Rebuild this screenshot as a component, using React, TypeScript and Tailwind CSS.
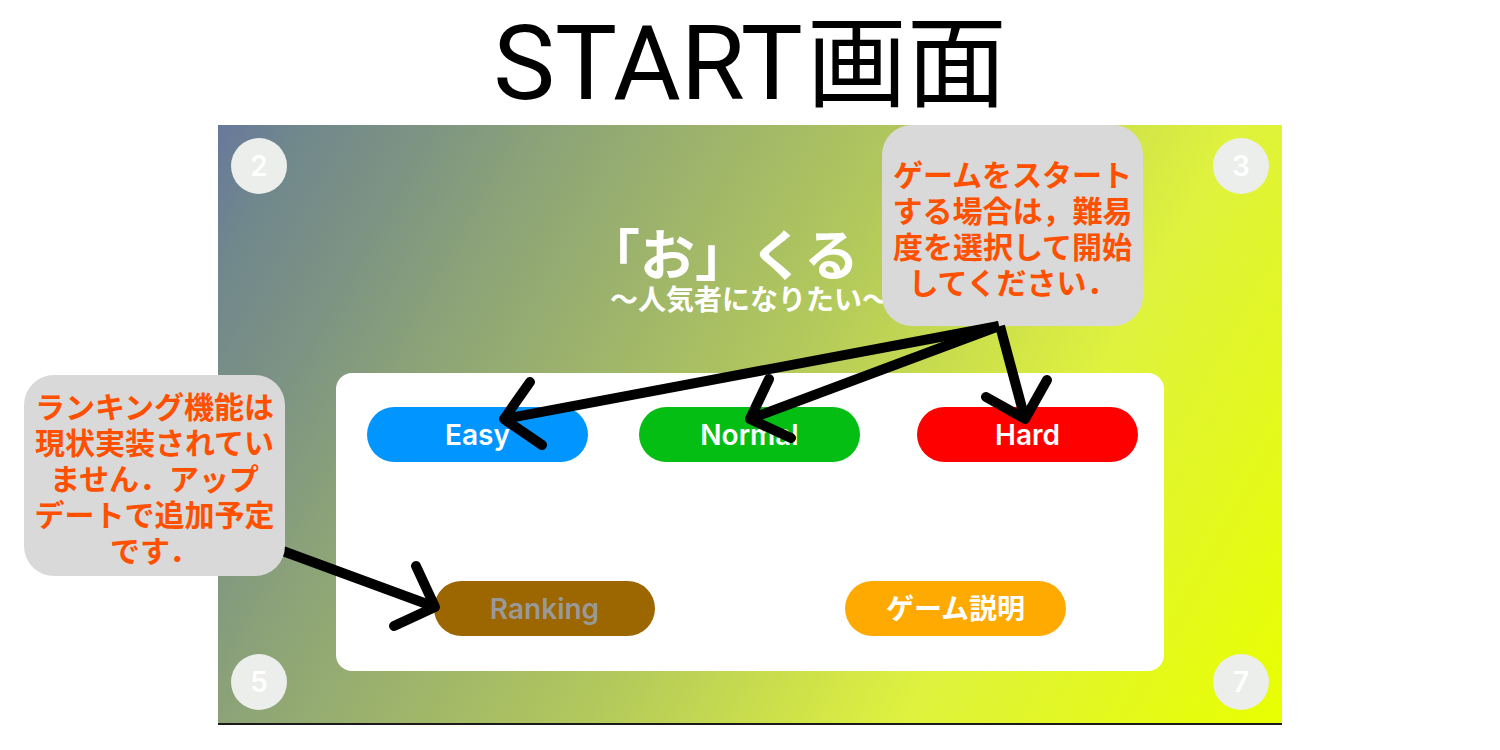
import type { ReactNode } from "react";

const ui = "font-['Inter','Noto_Sans_CJK_JP',sans-serif]";

function CornerButton({ label }: { label: string }) {
  return (
    <button
      type="button"
      className={`${ui} flex size-14 items-center justify-center rounded-full bg-[#ebeeeb] text-[28px] font-semibold text-white`}
    >
      {label}
    </button>
  );
}

function PillButton({
  children,
  color,
  disabled = false,
}: {
  children: ReactNode;
  color: string;
  disabled?: boolean;
}) {
  return (
    <button
      type="button"
      disabled={disabled}
      className={`${ui} flex h-[55px] w-[221px] items-center justify-center rounded-full text-[28px] leading-8 font-semibold ${color}`}
    >
      {children}
    </button>
  );
}

function Callout({ children, place }: { children: ReactNode; place: string }) {
  return (
    <aside
      className={`absolute flex h-[201px] w-[261px] items-center justify-center rounded-[30px] bg-[#d9d9d9] pt-2 text-center font-['Liberation_Sans','Noto_Sans_CJK_JP',sans-serif] text-[30px] leading-9 font-bold whitespace-nowrap text-[#ff5000] ${place}`}
    >
      <p>{children}</p>
    </aside>
  );
}

function Arrow({ line, head }: { line: string; head: string }) {
  return (
    <g fill="none" stroke="#000" strokeWidth="10">
      <path d={line} />
      <path d={head} strokeLinecap="round" strokeLinejoin="round" />
    </g>
  );
}

const overlay = "pointer-events-none absolute top-0 left-0 overflow-visible";

export default function App() {
  return (
    <main className="min-h-screen bg-white">
      <h1
        lang="ja"
        className="h-[125px] text-center font-['Roboto','Noto_Sans_CJK_JP',sans-serif] text-[100px] leading-[128px] text-black"
      >
        <span className="mr-1 text-[104px]">START</span>画面
      </h1>

      <section
        lang="ja"
        className="relative mx-auto flex w-full max-w-[1064px] justify-between border-b-2 border-[#1a1a1a] bg-[linear-gradient(119deg,#68789c_0%,#70888c_6%,#7c9284_14%,#8ca378_24%,#b2c85c_50%,#dff23e_73%,#e8ff00_100%)] p-[13px]"
      >
        <nav className="flex flex-col justify-between">
          <CornerButton label="2" />
          <CornerButton label="5" />
        </nav>

        <div className="flex w-[828px] flex-col pt-[90px] pb-[39px]">
          <header className="text-center font-['Liberation_Sans','Noto_Sans_CJK_JP',sans-serif] font-bold text-white">
            <h2 className="pr-14 text-[55px] leading-[57px]">「お」くる</h2>
            <p className="text-[28px] leading-8">～人気者になりたい～</p>
          </header>

          <div className="mt-[56px] flex flex-col gap-[119px] rounded-2xl bg-white pt-[34px] pb-[35px]">
            <div className="grid grid-cols-[272fr_278fr_221fr] pr-[26px] pl-[31px]">
              <PillButton color="bg-[#0095ff] text-white">Easy</PillButton>
              <PillButton color="bg-[#05be14] text-white">Normal</PillButton>
              <PillButton color="bg-[#ff0000] text-white">Hard</PillButton>
            </div>
            <div className="flex justify-between px-[98px]">
              <PillButton color="bg-[#9c6600] text-[#999999]" disabled>
                Ranking
              </PillButton>
              <PillButton color="bg-[#ffaa00] text-white">ゲーム説明</PillButton>
            </div>
          </div>
        </div>

        <nav className="flex flex-col justify-between">
          <CornerButton label="3" />
          <CornerButton label="7" />
        </nav>

        <svg className={overlay} width="1064" height="600" aria-hidden="true">
          <Arrow line="M62 425 L217 482" head="M198 441 L217 482 L176 501" />
        </svg>

        <Callout place="top-0 left-[664px]">
          ゲームをスタート
          <br />
          する場合は，難易
          <br />
          度を選択して開始
          <br />
          してください．
        </Callout>
        <Callout place="top-[250px] left-[-194px]">
          ランキング機能は
          <br />
          現状実装されてい
          <br />
          ません．アップ
          <br />
          デートで追加予定
          <br />
          です．
        </Callout>

        <svg className={overlay} width="1064" height="600" aria-hidden="true">
          <Arrow line="M781 201 L286 294" head="M312 257 L286 294 L324 320" />
          <Arrow line="M781 201 L532 294" head="M551 254 L532 294 L573 313" />
          <Arrow line="M782 201 L807 294" head="M768 272 L807 294 L829 255" />
        </svg>
      </section>
    </main>
  );
}
